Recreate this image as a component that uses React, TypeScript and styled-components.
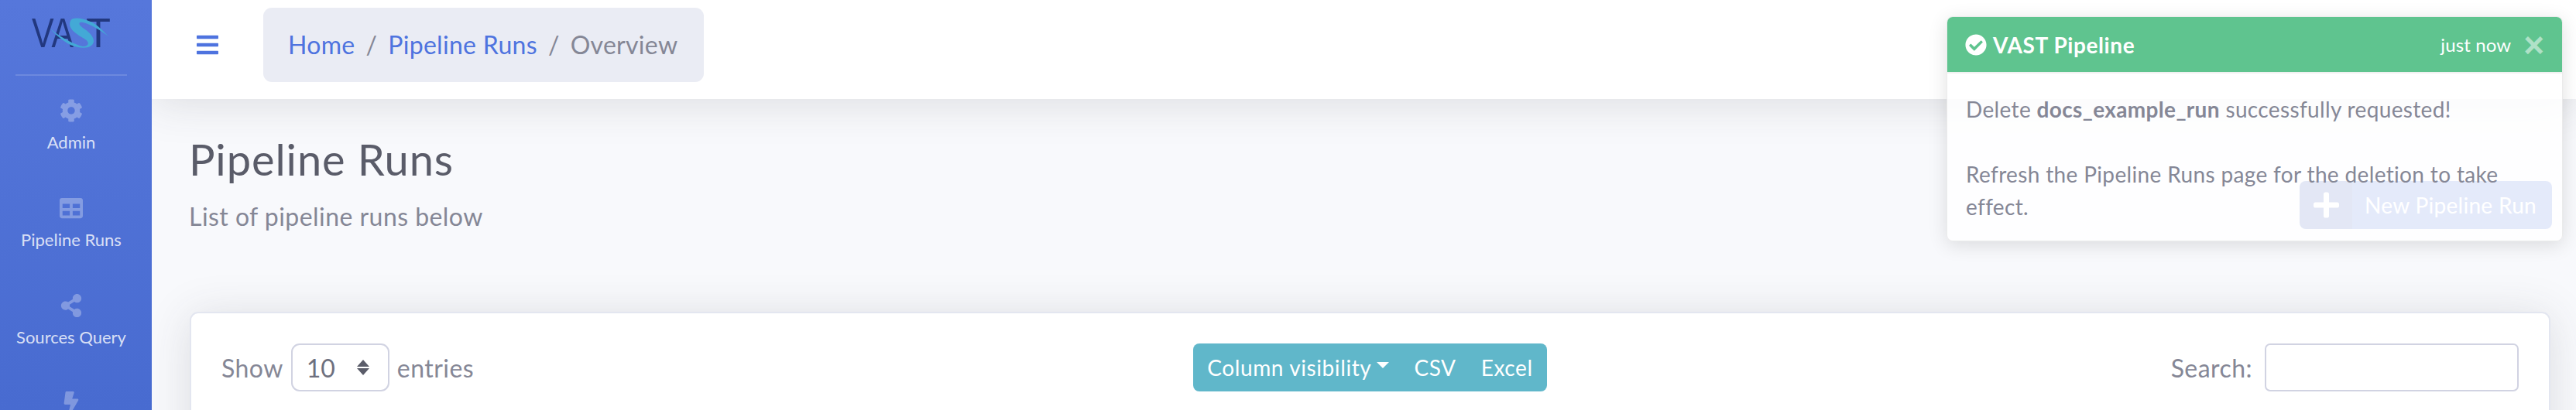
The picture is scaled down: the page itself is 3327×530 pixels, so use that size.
import React from 'react';
import styled, { createGlobalStyle } from 'styled-components';
import {
  FaBars,
  FaBolt,
  FaCheckCircle,
  FaCog,
  FaPlus,
  FaShareAlt,
  FaTable,
} from 'react-icons/fa';

const FONT = `Lato, 'Noto Sans', sans-serif`;

const GlobalStyle = createGlobalStyle`
  html, body {
    margin: 0;
    padding: 0;
    height: 530px;
    overflow: hidden;
    background: #f8f9fc;
  }
  * {
    box-sizing: border-box;
  }
`;

const Layout = styled.div`
  display: flex;
  position: relative;
  width: 3327px;
  height: 530px;
  overflow: hidden;
  font-family: ${FONT};
  font-size: 32px;
  color: #858796;
`;

const Sidebar = styled.nav`
  flex: 0 0 196px;
  position: relative;
  z-index: 2;
  padding-right: 12px;
  background: linear-gradient(180deg, #5677db 0%, #486bd0 100%);
`;

const Brand = styled.div`
  display: flex;
  justify-content: center;
  height: 96px;
  padding-top: 10px;
`;

const Divider = styled.hr`
  margin: 0 20px;
  border: 0;
  border-top: 2px solid rgba(255, 255, 255, 0.15);
`;

const NavItem = styled.a`
  display: flex;
  flex-direction: column;
  align-items: center;
  height: 126px;
  padding-top: 30px;
  color: rgba(255, 255, 255, 0.8);
  font-size: 22px;
  line-height: 36px;

  svg {
    display: block;
    width: 32px;
    height: 30px;
    color: rgba(255, 255, 255, 0.3);
    margin-bottom: 8px;
  }
`;

const Main = styled.div`
  flex: 1;
  min-width: 0;
  display: flex;
  flex-direction: column;
`;

const Topbar = styled.header`
  flex: 0 0 128px;
  display: flex;
  align-items: flex-start;
  padding: 10px 0 0 58px;
  background: #fff;
  position: relative;
  z-index: 1;
  box-shadow: 0 5px 56px 0 rgba(58, 59, 69, 0.15);
`;

const MenuButton = styled.div`
  display: flex;
  align-items: center;
  height: 96px;
  margin-right: 58px;
  color: #4e73df;

  svg {
    display: block;
    width: 28px;
    height: 32px;
  }
`;

const Breadcrumb = styled.ol`
  display: flex;
  margin: 0;
  padding: 24px 34px 24px 32px;
  list-style: none;
  height: 96px;
  line-height: 48px;
  background: #eaecf4;
  border-radius: 11px;
  letter-spacing: 0.3px;
`;

const Crumb = styled.li<{ $first?: boolean; $active?: boolean }>`
  color: ${(p) => (p.$active ? '#858796' : '#4e73df')};

  ${(p) =>
    !p.$first &&
    `
    &::before {
      content: '/';
      color: #858796;
      padding: 0 14px;
    }
  `}
`;

const Content = styled.main`
  flex: 1;
  padding: 0 33px 0 49px;
`;

const PageHeading = styled.div`
  display: flex;
  justify-content: space-between;
  align-items: flex-start;
  height: 275px;
  padding-top: 44px;
`;

const PageTitle = styled.h1`
  margin: 0 0 17px -1px;
  font-size: 56px;
  font-weight: 400;
  line-height: 67px;
  color: #5a5c69;
  letter-spacing: 0.9px;
`;

const PageSubtitle = styled.div`
  margin-left: -1px;
  line-height: 48px;
  letter-spacing: 0.45px;
`;

const NewRunButton = styled.a`
  display: flex;
  align-items: stretch;
  height: 62px;
  width: 326px;
  margin: 62px -2px 0 0;
  background: #4e73df;
  border-radius: 8px;
  color: #fff;
  font-size: 28px;
  line-height: 62px;
  overflow: hidden;
  letter-spacing: 0.3px;
`;

const NewRunIcon = styled.span`
  display: flex;
  align-items: center;
  justify-content: center;
  flex: 0 0 68px;
  background: rgba(0, 0, 0, 0.15);

  svg {
    width: 33px;
    height: 38px;
  }
`;

const NewRunLabel = styled.span`
  flex: 1;
  padding-left: 16px;
`;

const Card = styled.section`
  height: 400px;
  background: #fff;
  border: 2px solid #e3e6f0;
  border-radius: 11px;
  box-shadow: 0 5px 56px 0 rgba(58, 59, 69, 0.15);
  padding: 39px 39px 0;
`;

const TableToolbar = styled.div`
  display: grid;
  grid-template-columns: 1fr auto 1fr;
  align-items: center;
`;

const LengthControl = styled.div`
  display: flex;
  align-items: center;
  gap: 10px;
  letter-spacing: 0.45px;
`;

const Select = styled.div`
  display: flex;
  align-items: center;
  justify-content: space-between;
  width: 127px;
  height: 62px;
  padding: 0 24px 0 18px;
  border: 2px solid #d1d3e2;
  border-radius: 11px;
  color: #6e707e;
  letter-spacing: 0;

  svg {
    display: block;
  }
`;

const ButtonGroup = styled.div`
  display: flex;
  align-items: center;
  height: 62px;
  padding: 0 18px;
  gap: 32px;
  background: #60b7ca;
  border-radius: 8px;
  color: #fff;
  font-size: 28px;
  letter-spacing: 0.6px;
`;

const GroupButton = styled.span<{ $caret?: boolean }>`
  display: flex;
  align-items: center;

  ${(p) =>
    p.$caret &&
    `
    &::after {
      content: '';
      margin-left: 7px;
      margin-bottom: 6px;
      border-top: 8px solid #fff;
      border-left: 8px solid transparent;
      border-right: 8px solid transparent;
    }
  `}
`;

const SearchControl = styled.label`
  display: flex;
  align-items: center;
  justify-content: flex-end;
  gap: 16px;
  letter-spacing: 0.45px;
`;

const SearchInput = styled.input`
  width: 328px;
  height: 62px;
  border: 2px solid #d1d3e2;
  border-radius: 7px;
  background: #fff;
  outline: none;
`;

const Toast = styled.aside`
  position: absolute;
  z-index: 3;
  top: 21px;
  left: 2514px;
  width: 796px;
  height: 291px;
  background: rgba(255, 255, 255, 0.85);
  border: 1px solid rgba(0, 0, 0, 0.08);
  border-radius: 8px;
  box-shadow: 0 5px 24px rgba(0, 0, 0, 0.12);
  font-size: 28px;
  overflow: hidden;
`;

const ToastHeader = styled.div`
  display: flex;
  align-items: center;
  height: 73px;
  padding: 0 23px;
  background: #5fc48f;
  border-bottom: 2px solid #f0f1f1;
  color: #fff;
`;

const ToastTitle = styled.strong`
  flex: 1;
  display: flex;
  align-items: center;
  gap: 8px;
  font-weight: 700;
  letter-spacing: 0.6px;

  svg {
    width: 28px;
    height: 28px;
  }
`;

const ToastTime = styled.small`
  font-size: 24px;
  letter-spacing: 0.1px;
`;

const ToastClose = styled.span`
  margin-left: 16px;
  font-family: 'Liberation Sans', sans-serif;
  font-size: 46px;
  font-weight: 700;
  line-height: 40px;
  color: rgba(255, 255, 255, 0.5);
`;

const ToastBody = styled.div`
  padding: 25px 24px;
  line-height: 42px;
  letter-spacing: 0.35px;

  b {
    font-weight: 700;
  }
`;

const Logo = () => (
  <svg width="102" height="72" viewBox="0 -12 102 72">
    <g fontFamily="'Liberation Sans', sans-serif" fill="#22387f">
      <text x="0" y="39" fontSize="54" textLength="54" lengthAdjust="spacingAndGlyphs">
        VA
      </text>
      <text x="70" y="39" fontSize="54" textLength="32" lengthAdjust="spacingAndGlyphs">
        T
      </text>
    </g>
    <path
      d="M24 15 C36 26 56 36 66 38 C74 38 76 32 66 27 C56 21 46 14 50 5 C53 -1 66 2 76 6 C84 9 92 18 99 25 C90 18 76 9 66 7 C60 6 60 10 66 14 C76 20 84 30 78 36 C72 42 60 40 50 36 C40 31 30 22 24 15 Z"
      fill="#43a9d6"
    />
  </svg>
);

const SortArrows = () => (
  <svg width="16" height="20" viewBox="0 0 16 20">
    <path d="M8 0 16 9H0Z M0 11H16L8 20Z" fill="#5a5c69" />
  </svg>
);

const navItems = [
  { label: 'Admin', icon: <FaCog /> },
  { label: 'Pipeline Runs', icon: <FaTable /> },
  { label: 'Sources Query', icon: <FaShareAlt /> },
  { label: '', icon: <FaBolt /> },
];

export default function App() {
  return (
    <Layout>
      <GlobalStyle />
      <Sidebar>
        <Brand>
          <Logo />
        </Brand>
        <Divider />
        {navItems.map((item, i) => (
          <NavItem key={i}>
            {item.icon}
            {item.label}
          </NavItem>
        ))}
      </Sidebar>
      <Main>
        <Topbar>
          <MenuButton>
            <FaBars />
          </MenuButton>
          <Breadcrumb>
            <Crumb $first>Home</Crumb>
            <Crumb>Pipeline Runs</Crumb>
            <Crumb $active>Overview</Crumb>
          </Breadcrumb>
        </Topbar>
        <Content>
          <PageHeading>
            <div>
              <PageTitle>Pipeline Runs</PageTitle>
              <PageSubtitle>List of pipeline runs below</PageSubtitle>
            </div>
            <NewRunButton>
              <NewRunIcon>
                <FaPlus />
              </NewRunIcon>
              <NewRunLabel>New Pipeline Run</NewRunLabel>
            </NewRunButton>
          </PageHeading>
          <Card>
            <TableToolbar>
              <LengthControl>
                Show
                <Select>
                  10
                  <SortArrows />
                </Select>
                entries
              </LengthControl>
              <ButtonGroup>
                <GroupButton $caret>Column visibility</GroupButton>
                <GroupButton>CSV</GroupButton>
                <GroupButton>Excel</GroupButton>
              </ButtonGroup>
              <SearchControl>
                Search:
                <SearchInput />
              </SearchControl>
            </TableToolbar>
          </Card>
        </Content>
      </Main>
      <Toast>
        <ToastHeader>
          <ToastTitle>
            <FaCheckCircle />
            VAST Pipeline
          </ToastTitle>
          <ToastTime>just now</ToastTime>
          <ToastClose>×</ToastClose>
        </ToastHeader>
        <ToastBody>
          Delete <b>docs_example_run</b> successfully requested!
          <br />
          <br />
          Refresh the Pipeline Runs page for the deletion to take effect.
        </ToastBody>
      </Toast>
    </Layout>
  );
}
